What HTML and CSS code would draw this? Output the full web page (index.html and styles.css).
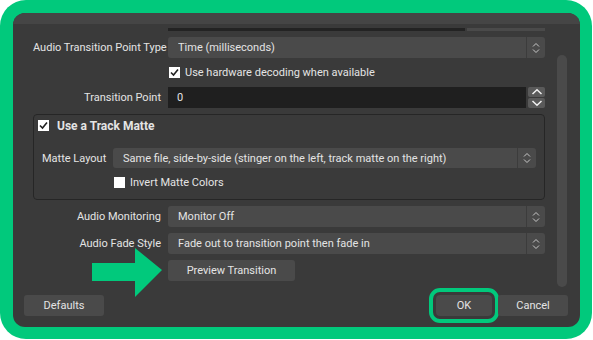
FILE: index.html
```html
<!DOCTYPE html>
<html lang="en">

<head>
    <meta charset="UTF-8">
    <meta name="viewport" content="width=device-width, initial-scale=1.0">
    <title>Stinger Properties</title>
    <link rel="stylesheet" href="styles.css">
</head>

<body>

    <div class="frame">
        <div class="dialog">
            <div class="top-strip"></div>

            <div class="main">
                <!-- Properties form -->
                <div class="form">
                    <div class="row">
                        <span></span>
                        <div class="cut-off">
                            <div class="cut-dark"></div>
                            <div class="cut-light"></div>
                        </div>
                    </div>

                    <div class="row">
                        <label>Audio Transition Point Type</label>
                        <div class="combo">
                            <span>Time (milliseconds)</span>
                            <div class="combo-arrows">
                                <svg width="8" height="14" viewBox="0 0 8 14"><path d="M1 5.5 L4 2.5 L7 5.5 M1 8.5 L4 11.5 L7 8.5" fill="none" stroke="#c8c8c8" stroke-width="1"/></svg>
                            </div>
                        </div>
                    </div>

                    <div class="row check-row">
                        <span></span>
                        <div class="check-item">
                            <span class="checkbox">
                                <svg width="11" height="11" viewBox="0 0 11 11"><path d="M2 5.5 L4.5 8 L9 2.5" fill="none" stroke="#222" stroke-width="1.6"/></svg>
                            </span>
                            Use hardware decoding when available
                        </div>
                    </div>

                    <div class="row">
                        <label>Transition Point</label>
                        <div class="spin">
                            <span class="spin-value">0</span>
                            <div class="spin-buttons">
                                <span class="spin-btn"><svg width="12" height="8" viewBox="0 0 12 8"><path d="M1.5 6 L6 1.8 L10.5 6" fill="none" stroke="#f0f0f0" stroke-width="1.5"/></svg></span>
                                <span class="spin-btn"><svg width="12" height="8" viewBox="0 0 12 8"><path d="M1.5 2 L6 6.2 L10.5 2" fill="none" stroke="#f0f0f0" stroke-width="1.5"/></svg></span>
                            </div>
                        </div>
                    </div>

                    <!-- Track matte group -->
                    <div class="group">
                        <div class="group-title">
                            <span class="checkbox">
                                <svg width="11" height="11" viewBox="0 0 11 11"><path d="M2 5.5 L4.5 8 L9 2.5" fill="none" stroke="#222" stroke-width="1.6"/></svg>
                            </span>
                            Use a Track Matte
                        </div>
                        <div class="group-row">
                            <label>Matte Layout</label>
                            <div class="combo">
                                <span>Same file, side-by-side (stinger on the left, track matte on the right)</span>
                                <div class="combo-arrows">
                                    <svg width="8" height="14" viewBox="0 0 8 14"><path d="M1 5.5 L4 2.5 L7 5.5 M1 8.5 L4 11.5 L7 8.5" fill="none" stroke="#c8c8c8" stroke-width="1"/></svg>
                                </div>
                            </div>
                        </div>
                        <div class="group-check">
                            <span class="checkbox"></span>
                            Invert Matte Colors
                        </div>
                    </div>

                    <div class="row">
                        <label>Audio Monitoring</label>
                        <div class="combo">
                            <span>Monitor Off</span>
                            <div class="combo-arrows">
                                <svg width="8" height="14" viewBox="0 0 8 14"><path d="M1 5.5 L4 2.5 L7 5.5 M1 8.5 L4 11.5 L7 8.5" fill="none" stroke="#c8c8c8" stroke-width="1"/></svg>
                            </div>
                        </div>
                    </div>

                    <div class="row">
                        <label>Audio Fade Style</label>
                        <div class="combo">
                            <span>Fade out to transition point then fade in</span>
                            <div class="combo-arrows">
                                <svg width="8" height="14" viewBox="0 0 8 14"><path d="M1 5.5 L4 2.5 L7 5.5 M1 8.5 L4 11.5 L7 8.5" fill="none" stroke="#c8c8c8" stroke-width="1"/></svg>
                            </div>
                        </div>
                    </div>

                    <div class="row">
                        <span></span>
                        <div><button class="btn preview-btn">Preview Transition</button></div>
                    </div>
                </div>

                <div class="scrollbar"></div>
            </div>

            <!-- Dialog buttons -->
            <div class="footer">
                <button class="btn defaults-btn">Defaults</button>
                <div class="footer-right">
                    <button class="btn ok-btn">OK</button>
                    <button class="btn cancel-btn">Cancel</button>
                </div>
            </div>
        </div>

        <!-- Annotation arrow -->
        <svg class="arrow" width="74" height="52" viewBox="0 0 74 52">
            <polygon points="2,17 45,17 45,2 72,24 45,51 45,35 2,35" fill="#01c97c"/>
        </svg>
    </div>

</body>

</html>
```

FILE: styles.css
```css
* {
    margin: 0;
    padding: 0;
    box-sizing: border-box;
}

body {
    background-color: #fff;
    font-family: Roboto, "Liberation Sans", sans-serif;
    font-size: 11px;
    color: #e4e4e4;
}

/* Green highlight frame */
.frame {
    position: relative;
    width: 592px;
    height: 339px;
    background-color: #01c97c;
    border-radius: 26px;
    padding: 13px 12px 12px 13px;
}

.dialog {
    height: 100%;
    background-color: #3a3a3a;
    border-radius: 12px;
    overflow: hidden;
    display: flex;
    flex-direction: column;
}

.top-strip {
    height: 11px;
    background-color: #454545;
}

.main {
    height: 265px;
    display: flex;
}

/* Form */
.form {
    flex: 1;
    padding: 4px 12px 0 20px;
    display: flex;
    flex-direction: column;
    gap: 6px;
}

.row {
    display: grid;
    grid-template-columns: 128px 1fr;
    column-gap: 7px;
    align-items: center;
}

.row label {
    text-align: right;
    white-space: nowrap;
}

.check-row {
    height: 17px;
}

.cut-off {
    display: flex;
    gap: 2px;
    height: 3px;
}

.cut-dark {
    width: 297px;
    background-color: #232323;
}

.cut-light {
    flex: 1;
    background-color: #4a4a4a;
}

.combo {
    height: 21px;
    display: flex;
    align-items: center;
    background-color: #4a4a4a;
    border-radius: 3px;
    padding-left: 10px;
}

.combo span {
    flex: 1;
    white-space: nowrap;
    overflow: hidden;
}

.combo-arrows {
    width: 19px;
    height: 100%;
    border-left: 1px solid #3c3c3c;
    display: flex;
    align-items: center;
    justify-content: center;
}

.check-item,
.group-title,
.group-check {
    display: flex;
    align-items: center;
    gap: 5px;
    white-space: nowrap;
}

.checkbox {
    width: 11px;
    height: 11px;
    background-color: #fff;
    display: flex;
}

.check-item {
    padding-left: 1px;
}

.spin {
    height: 21px;
    display: flex;
    align-items: stretch;
    gap: 2px;
}

.spin-value {
    flex: 1;
    background-color: #1f1f1f;
    padding-left: 9px;
    display: flex;
    align-items: center;
}

.spin-buttons {
    width: 17px;
    display: flex;
    flex-direction: column;
    gap: 1px;
}

.spin-btn {
    flex: 1;
    background-color: #5a5a5a;
    border-radius: 2px;
    display: flex;
    align-items: center;
    justify-content: center;
}

/* Track matte group box */
.group {
    height: 86px;
    border: 1px solid #262626;
    border-radius: 4px;
    padding: 4px 8px 0 4px;
}

.group-title {
    height: 13px;
    font-weight: bold;
    font-size: 12px;
    gap: 8px;
}

.group-row {
    margin-top: 16px;
    padding-left: 4px;
    display: grid;
    grid-template-columns: 64px 1fr;
    column-gap: 7px;
    align-items: center;
}

.group-row label {
    white-space: nowrap;
}

.group-row .combo {
    height: 20px;
}

.group-check {
    margin-top: 8px;
    height: 13px;
    padding-left: 76px;
}

/* Buttons */
.btn {
    height: 21px;
    background-color: #4a4a4a;
    color: #e4e4e4;
    border: none;
    border-radius: 3px;
    font-family: inherit;
    font-size: 11px;
}

.preview-btn {
    width: 127px;
}

.scrollbar {
    width: 10px;
    height: 232px;
    margin: 31px 13px 0 0;
    border-radius: 5px;
    background-color: #4a4a4a;
}

.footer {
    display: flex;
    justify-content: space-between;
    padding: 6px 12px 0 11px;
}

.footer-right {
    display: flex;
    gap: 6px;
}

.defaults-btn {
    width: 80px;
}

.ok-btn {
    width: 56px;
    outline: 4px solid #01c97c;
    outline-offset: 3px;
    border-radius: 4px;
}

.cancel-btn {
    width: 70px;
}

.arrow {
    position: absolute;
    left: 90px;
    top: 246px;
}
```
